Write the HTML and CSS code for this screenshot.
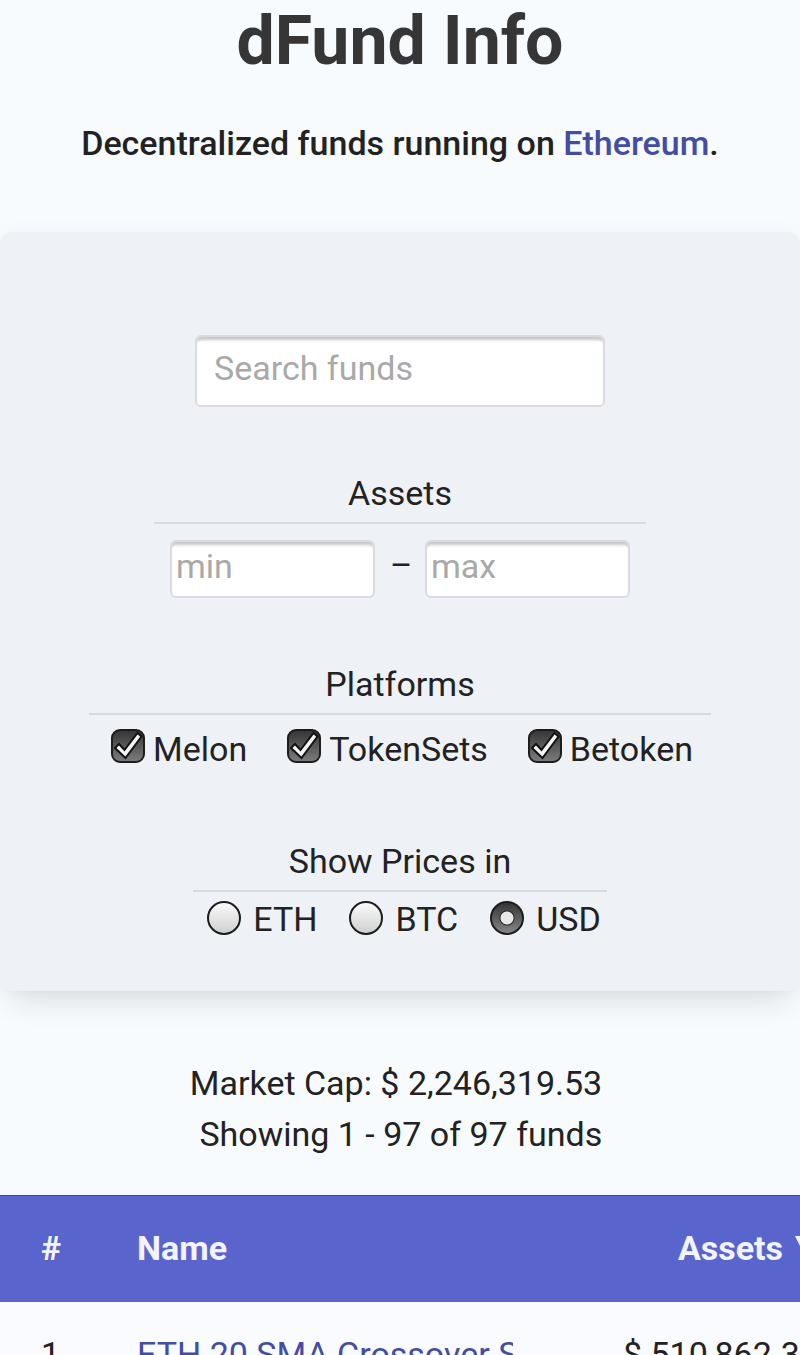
FILE: index.html
```html
<!DOCTYPE html>
<html lang="en">
<head>
<meta charset="utf-8">
<meta name="viewport" content="width=device-width, initial-scale=1">
<title>dFund Info</title>
<link rel="stylesheet" href="styles.css">
</head>
<body>
<header class="masthead">
  <h1 class="title">dFund Info</h1>
  <p class="tagline">Decentralized funds running on <a class="link" href="#ethereum">Ethereum</a>.</p>
</header>
<main>
  <form class="filters">
    <input class="field search" type="search" placeholder="Search funds" aria-label="Search funds">
    <fieldset class="group">
      <legend class="legend">Assets</legend>
      <div class="options range">
        <input class="field amount" type="text" placeholder="min" aria-label="Minimum assets">
        <span>–</span>
        <input class="field amount" type="text" placeholder="max" aria-label="Maximum assets">
      </div>
    </fieldset>
    <fieldset class="group">
      <legend class="legend">Platforms</legend>
      <div class="options platforms">
        <label class="choice"><span class="control"><input class="box" type="checkbox" checked><svg class="tick" viewBox="0 0 34 34" aria-hidden="true"><path d="M4 19l4-4 5.500 6L26.500 4l4 3.500L14.500 29z"/></svg></span>Melon</label>
        <label class="choice"><span class="control"><input class="box" type="checkbox" checked><svg class="tick" viewBox="0 0 34 34" aria-hidden="true"><path d="M4 19l4-4 5.500 6L26.500 4l4 3.500L14.500 29z"/></svg></span>TokenSets</label>
        <label class="choice"><span class="control"><input class="box" type="checkbox" checked><svg class="tick" viewBox="0 0 34 34" aria-hidden="true"><path d="M4 19l4-4 5.500 6L26.500 4l4 3.500L14.500 29z"/></svg></span>Betoken</label>
      </div>
    </fieldset>
    <fieldset class="group">
      <legend class="legend">Show Prices in</legend>
      <div class="options prices">
        <label class="choice currency"><input class="radio" type="radio" name="currency">ETH</label>
        <label class="choice currency"><input class="radio" type="radio" name="currency">BTC</label>
        <label class="choice currency"><input class="radio" type="radio" name="currency" checked>USD</label>
      </div>
    </fieldset>
  </form>
  <div class="summary">
    <p class="line">Market Cap: $ 2,246,319.53</p>
    <p class="line">Showing 1 - 97 of 97 funds</p>
  </div>
  <div class="table-wrap">
    <table class="funds">
      <thead>
        <tr><th class="rank">#</th><th class="name">Name</th><th class="assets">Assets<svg class="sort" viewBox="0 0 24 24" aria-hidden="true"><path d="M0 0h24L12 24z"/></svg></th></tr>
      </thead>
      <tbody>
        <tr><td class="rank">1</td><td class="name"><a class="link fund" href="#fund">ETH 20 SMA Crossover Set</a></td><td class="assets">$ 510,862.37</td></tr>
      </tbody>
    </table>
  </div>
</main>
</body>
</html>
```
FILE: styles.css
```css
* { box-sizing: border-box; }

body {
  height: 100vh;
  margin: 0;
  overflow: hidden;
  background: #f7fbfe;
  color: #222;
  font: 34px/51px Roboto, "Liberation Sans", sans-serif;
}

.masthead { text-align: center; }

.title {
  margin: 0;
  color: #363636;
  font-size: 68px;
  line-height: 82px;
}

.tagline {
  margin: 0;
  padding: 36px 16px 63px;
  font-weight: 500;
}

.link { color: #434da3; text-decoration: none; }

.filters {
  display: flex;
  flex-direction: column;
  align-items: center;
  padding: 103px 16px 46px;
  border-radius: 12px;
  background: #eef1f5;
  box-shadow: 0 20px 30px -10px rgba(0, 0, 0, 0.11), 0 0 20px rgba(0, 0, 0, 0.03);
}

.field {
  border: 2px solid #dadbe0;
  border-radius: 6px;
  background: #fff;
  box-shadow: inset 0 5px 3px -2px #c8c8ca;
  color: #222;
  font: inherit;
  appearance: none;
}

.field::placeholder { color: #a9a9a9; opacity: 1; }

.search {
  width: 410px;
  max-width: 100%;
  height: 72px;
  padding: 0 17px 6px;
}

.group {
  width: fit-content;
  min-width: 0;
  margin: 61px 0 0;
  padding: 0;
  border: 0;
}

.legend {
  width: 100%;
  padding: 0 0 3px;
  border-bottom: 2px solid #d9dadf;
  text-align: center;
}

.options { display: flex; align-items: center; }

.range { align-items: flex-start; gap: 15px; padding: 16px 16px 0; }

.range span { width: 20px; text-align: center; }

.amount { width: 205px; height: 58px; padding: 0 4px 6px; }

.platforms { gap: 40px; padding: 9px 18px 0 22px; }

.prices { gap: 32px; padding: 2px 6px 0 14px; }

.choice { display: flex; align-items: center; gap: 8px; }

.currency { gap: 12px; }

.control { display: grid; height: 42px; }

.box,
.radio {
  width: 34px;
  height: 34px;
  margin: 0;
  appearance: none;
  border: 2px solid #1c1c1c;
}

.box {
  grid-area: 1 / 1;
  border-radius: 9px;
  background: linear-gradient(#363636, #7b7b7b);
}

.tick {
  grid-area: 1 / 1;
  width: 34px;
  height: 34px;
  fill: none;
  pointer-events: none;
}

.box:checked + .tick {
  fill: #f5f5f5;
  stroke: #111;
  stroke-width: 2;
}

.radio {
  margin-bottom: 4px;
  border-radius: 50%;
  background: linear-gradient(#fafafa, #cfd0d1);
}

.radio:checked {
  background:
    radial-gradient(circle, #e8e8e8 6px, #222 7px, transparent 8px),
    linear-gradient(#363636, #858585);
}

.summary {
  width: fit-content;
  margin: 0 auto;
  padding: 67px 8px 35px 0;
  text-align: right;
}

.line { margin: 0; }

.table-wrap { overflow: hidden; }

.funds { width: 864px; border-collapse: collapse; table-layout: fixed; }

.funds th {
  height: 107px;
  background: #5965cd;
  color: #f3f3ff;
  box-shadow: inset 0 1px #2d43c3;
}

.funds th,
.funds td { padding: 0; text-align: left; white-space: nowrap; }

.funds td { height: 104px; background: #f9fbff; }

.funds .rank { width: 137px; padding-left: 41px; }

.funds .name { width: 376px; }

.funds .assets { padding-right: 45px; text-align: right; }

.sort { width: 24px; height: 24px; margin-left: 12px; fill: #f3f3ff; }

.fund { display: block; overflow: hidden; }
```
